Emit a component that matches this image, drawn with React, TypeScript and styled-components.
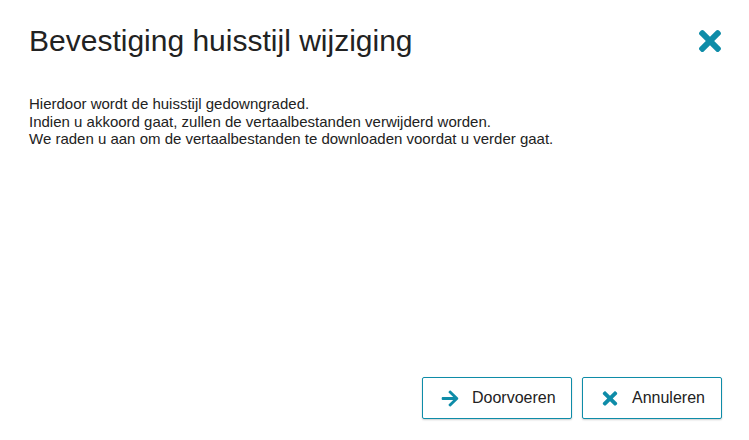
import styled, { createGlobalStyle } from "styled-components";
import { FaArrowRight, FaTimes } from "react-icons/fa";

const GlobalStyle = createGlobalStyle`
    html, body {
        margin: 0;
        padding: 0;
        background: #fff;
        font-family: "Liberation Sans", Arial, sans-serif;
        color: #222;
    }
`;

export default function App() {
    return (
        <>
            <GlobalStyle />
            <Dialog>
                <Header>
                    <Title>Bevestiging huisstijl wijziging</Title>
                    <CloseButton aria-label="Sluiten">
                        <FaTimes size={32} />
                    </CloseButton>
                </Header>
                <Body>
                    Hierdoor wordt de huisstijl gedowngraded.
                    <br />
                    Indien u akkoord gaat, zullen de vertaalbestanden verwijderd worden.
                    <br />
                    We raden u aan om de vertaalbestanden te downloaden voordat u verder gaat.
                </Body>
                <Footer>
                    <ActionButton $width={150}>
                        <IconWrapper>
                            <FaArrowRight size={19} />
                        </IconWrapper>
                        Doorvoeren
                    </ActionButton>
                    <ActionButton $width={140}>
                        <IconWrapper>
                            <FaTimes size={21} />
                        </IconWrapper>
                        Annuleren
                    </ActionButton>
                </Footer>
            </Dialog>
        </>
    );
}

const Dialog = styled.div`
    height: 100vh;
    box-sizing: border-box;
    padding: 23px 27px 21px 29px;
    display: flex;
    flex-direction: column;
`;

const Header = styled.div`
    display: flex;
    align-items: center;
    justify-content: space-between;
`;

const Title = styled.h1`
    margin: 0;
    font-size: 30px;
    font-weight: 400;
    line-height: 36px;
    color: #222;
`;

const CloseButton = styled.button`
    border: 0;
    background: none;
    padding: 0;
    margin-right: -4px;
    color: #0e8ca8;
    display: flex;
    cursor: pointer;
`;

const Body = styled.div`
    flex: 1;
    padding-top: 36px;
    font-size: 15px;
    line-height: 17.5px;
    color: #222;
`;

const Footer = styled.div`
    display: flex;
    justify-content: flex-end;
    gap: 10px;
`;

const ActionButton = styled.button<{ $width: number }>`
    width: ${(p) => p.$width}px;
    height: 42px;
    box-sizing: border-box;
    border: 1px solid #0e8ca8;
    border-radius: 2px;
    background: #fff;
    box-shadow: 0 1px 2px rgba(0, 0, 0, 0.2);
    padding: 0 0 0 18px;
    display: flex;
    align-items: center;
    font-family: "Liberation Sans", Arial, sans-serif;
    font-size: 16px;
    color: #222;
    cursor: pointer;
`;

const IconWrapper = styled.span`
    width: 18px;
    display: flex;
    justify-content: center;
    overflow: visible;
    color: #0e8ca8;
    margin-right: 13px;
`;
